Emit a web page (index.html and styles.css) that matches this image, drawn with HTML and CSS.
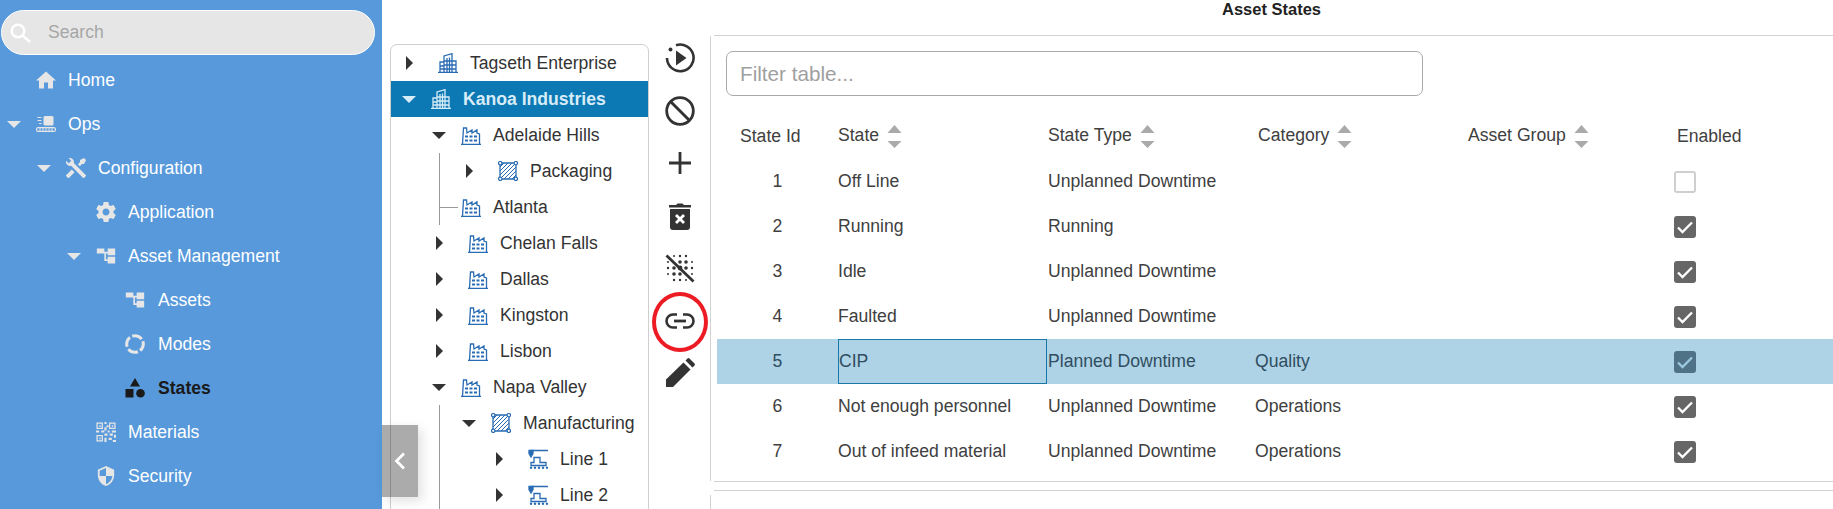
FILE: index.html
```html
<!DOCTYPE html>
<html lang="en">
<head>
<meta charset="utf-8">
<title>Asset States</title>
<link rel="stylesheet" href="styles.css">
</head>
<body>
<svg class="defs" aria-hidden="true">
  <symbol id="i-tree" viewBox="0 0 24 24"><path fill="currentColor" d="M1 3h9v4h4V3h9v8h-9V9h-2v7h2v-3h9v8h-9v-3h-4V9h-0.5v-2H10v2H1z"/></symbol>
  <symbol id="i-building" viewBox="0 0 20 20"><g fill="none" stroke="currentColor" stroke-width="1.3"><path d="M0 19.3h20M2 19V9h4M6 19V3l8-2.3V19M14 8h4v11M9 5v14M11.5 4.5V19M6 8h8M6 12h8M6 16h8M2 13h4M2 16h4M14 12h4M14 16h4"/></g></symbol>
  <symbol id="i-factory" viewBox="0 0 20 20"><g fill="none" stroke="currentColor" stroke-width="1.3"><path d="M0 19.3h20M1.5 19l1-16h3L6 8l5-3v3l5-3v3l2.500 1v10"/><path stroke-width="2" stroke-dasharray="3 1.500" d="M4 11.500h12M4 15.500h12"/></g></symbol>
  <symbol id="i-area" viewBox="0 0 20 20"><path fill="none" stroke="currentColor" stroke-width="1.300" d="M2 2h16v16H2z"/><path fill="none" stroke="currentColor" stroke-width="1" d="M2 6l4-4M2 10l8-8M2 14L14 2M3 17L17 3M6 18L18 6M10 18l8-8M14 18l4-4"/><g fill="#fff" stroke="currentColor" stroke-width="1.200"><circle cx="2.200" cy="2.200" r="1.700"/><circle cx="17.800" cy="2.200" r="1.700"/><circle cx="2.200" cy="17.800" r="1.700"/><circle cx="17.800" cy="17.800" r="1.700"/></g></symbol>
  <symbol id="i-line" viewBox="0 0 20 20"><g fill="none" stroke="currentColor" stroke-width="1.300"><path d="M3 1.500h17M6 8.500h6v5h6v3H3v-3h3z"/><path fill="currentColor" d="M1 1.500h4v3L3 8 1 4.500z"/></g><g fill="currentColor"><circle cx="3" cy="18.700" r="1.200"/><circle cx="7" cy="18.700" r="1.200"/><circle cx="11" cy="18.700" r="1.200"/><circle cx="15" cy="18.700" r="1.200"/><circle cx="19" cy="18.700" r="1.200"/></g></symbol>
  <symbol id="i-check" viewBox="0 0 22 22"><path fill="none" stroke="currentColor" stroke-width="2.300" d="M4 11.500l4.500 4.500L18 6.500"/></symbol>
  <symbol id="i-sort" viewBox="0 0 15 23"><path fill="currentColor" d="M7.500 0l7 8H.5zM.5 16h14l-7 7z"/></symbol>
</svg>

<aside class="sidebar">
  <div class="search">
    <svg class="search-icon" viewBox="0 0 21 20"><circle cx="8" cy="8" r="6.300" fill="none" stroke="currentColor" stroke-width="2.400"/><path d="M12.500 12.500l7.500 6.500" fill="none" stroke="currentColor" stroke-width="2.400"/></svg>
    <span class="search-text">Search</span>
  </div>
  <nav>
    <div class="nav-row lvl0 noarrow">
      <svg class="nav-icon" viewBox="2 3 20 17"><path fill="currentColor" d="M10 20v-6h4v6h5v-8h3L12 3 2 12h3v8z"/></svg>
      <span>Home</span>
    </div>
    <div class="nav-row lvl0">
      <i class="nav-arrow"></i>
      <svg class="nav-icon" viewBox="0 0 20 16"><rect x="7.500" y="0" width="10" height="9.500" rx="1.500" fill="currentColor"/><path stroke="currentColor" stroke-width="1.200" d="M1.500 1.500h4M1.500 4.500h4M3 7.500h2.500"/><rect x=".6" y="11.600" width="18.800" height="3.800" rx="1.500" fill="none" stroke="currentColor" stroke-width="1.200"/><path stroke="currentColor" stroke-width="1" d="M4 12v3M7 12v3M10 12v3M13 12v3M16 12v3"/></svg>
      <span>Ops</span>
    </div>
    <div class="nav-row lvl1">
      <i class="nav-arrow"></i>
      <svg class="nav-icon" viewBox="2 2 20 20"><path fill="currentColor" d="M21.710 20.290L20.290 21.710A1 1 0 0 1 18.880 21.710L7 9.850A3.810 3.810 0 0 1 6 10A4 4 0 0 1 2.220 4.700L4.760 7.240L5.290 6.710L6.710 5.290L7.240 4.760L4.700 2.220A4 4 0 0 1 10 6A3.810 3.810 0 0 1 9.850 7L21.710 18.880A1 1 0 0 1 21.710 20.290M2.290 18.880A1 1 0 0 0 2.290 20.290L3.710 21.710A1 1 0 0 0 5.120 21.710L10.590 16.250L7.760 13.420M20 2L16 4V6L13.830 8.170L15.830 10.170L18 8H20L22 4Z"/></svg>
      <span>Configuration</span>
    </div>
    <div class="nav-row lvl2 noarrow">
      <svg class="nav-icon" viewBox="2 2 20 20"><path fill="currentColor" d="M19.430 12.980c.040-.320.070-.640.070-.980s-.030-.660-.070-.980l2.110-1.650c.190-.150.240-.420.120-.640l-2-3.460c-.120-.220-.390-.300-.610-.220l-2.490 1c-.520-.400-1.080-.730-1.690-.980l-.380-2.650C14.460 2.180 14.250 2 14 2h-4c-.250 0-.460.180-.490.420l-.380 2.650c-.610.250-1.170.590-1.690.980l-2.490-1c-.230-.090-.490 0-.610.220l-2 3.460c-.130.220-.070.490.120.640l2.110 1.650c-.040.320-.070.650-.070.980s.030.660.070.980l-2.110 1.650c-.190.150-.240.420-.120.640l2 3.460c.120.220.390.300.610.220l2.490-1c.520.400 1.080.730 1.690.980l.380 2.650c.030.240.240.420.490.420h4c.250 0 .460-.180.490-.420l.380-2.650c.610-.250 1.170-.590 1.690-.980l2.490 1c.230.090.490 0 .610-.220l2-3.460c.120-.220.070-.490-.120-.640l-2.110-1.650zM12 15.500c-1.930 0-3.500-1.570-3.500-3.500s1.570-3.500 3.500-3.500 3.500 1.570 3.500 3.500-1.570 3.500-3.500 3.500z"/></svg>
      <span>Application</span>
    </div>
    <div class="nav-row lvl2">
      <i class="nav-arrow"></i>
      <svg class="nav-icon"><use href="#i-tree"/></svg>
      <span>Asset Management</span>
    </div>
    <div class="nav-row lvl3 noarrow">
      <svg class="nav-icon"><use href="#i-tree"/></svg>
      <span>Assets</span>
    </div>
    <div class="nav-row lvl3 noarrow">
      <svg class="nav-icon" viewBox="0 0 20 20"><circle cx="10" cy="10" r="8.300" fill="none" stroke="currentColor" stroke-width="3" stroke-dasharray="10.500 2.500" stroke-dashoffset="3"/></svg>
      <span>Modes</span>
    </div>
    <div class="nav-row lvl3 noarrow active">
      <svg class="nav-icon" viewBox="0 0 20 20"><path fill="currentColor" d="M10 0l5 8.500H5zM.5 11h8v8.500h-8z"/><circle cx="15.500" cy="15.300" r="4.300" fill="currentColor"/></svg>
      <span>States</span>
    </div>
    <div class="nav-row lvl2 noarrow">
      <svg class="nav-icon qr" viewBox="0 0 19 19"><g fill="none" stroke="currentColor" stroke-width="1.200"><path d="M1 1h5v5H1zM13 1h5v5h-5zM1 13h5v5H1z"/></g><path fill="currentColor" d="M3 3h1.500v1.500H3zM15 3h1.500v1.500H15zM3 15h1.500v1.500H3zM8 0h2v2H8zM10 3h2v2h-2zM8 5h2v3H8zM0 8h3v2H0zM5 8h3v2H5zM11 8h2v2h-2zM15 8h4v2h-4zM8 11h3v2H8zM13 11h3v2h-3zM17 12h2v3h-2zM8 15h2v4H8zM12 15h3v2h-3zM16 17h3v2h-3z"/></svg>
      <span>Materials</span>
    </div>
    <div class="nav-row lvl2 noarrow">
      <svg class="nav-icon shield" viewBox="3 1 18 22"><path fill="currentColor" d="M12 1L3 5v6c0 5.550 3.840 10.740 9 12 5.160-1.260 9-6.450 9-12V5l-9-4zm0 10.990h7c-.530 4.120-3.280 7.790-7 8.940V12H5V6.300l7-3.110v8.800z"/></svg>
      <span>Security</span>
    </div>
  </nav>
</aside>

<button class="collapse" type="button" aria-label="Collapse">
  <svg viewBox="0 0 12 18"><path d="M10 1.500L2.500 9l7.500 7.500" fill="none" stroke="currentColor" stroke-width="2.800"/></svg>
</button>

<section class="tree-col">
  <div class="tree">
    <div class="t-row d0"><i class="t-arrow right"></i><svg class="t-icon"><use href="#i-building"/></svg><span>Tagseth Enterprise</span></div>
    <div class="t-row d0 selected"><i class="t-arrow down"></i><svg class="t-icon"><use href="#i-building"/></svg><span>Kanoa Industries</span></div>
    <div class="t-row d1"><i class="t-arrow down"></i><svg class="t-icon"><use href="#i-factory"/></svg><span>Adelaide Hills</span></div>
    <div class="t-row d2 guide"><i class="t-arrow right"></i><svg class="t-icon"><use href="#i-area"/></svg><span>Packaging</span></div>
    <div class="t-row d1 guide guide-end"><i class="t-arrow none"></i><svg class="t-icon"><use href="#i-factory"/></svg><span>Atlanta</span></div>
    <div class="t-row d1"><i class="t-arrow right"></i><svg class="t-icon"><use href="#i-factory"/></svg><span>Chelan Falls</span></div>
    <div class="t-row d1"><i class="t-arrow right"></i><svg class="t-icon"><use href="#i-factory"/></svg><span>Dallas</span></div>
    <div class="t-row d1"><i class="t-arrow right"></i><svg class="t-icon"><use href="#i-factory"/></svg><span>Kingston</span></div>
    <div class="t-row d1"><i class="t-arrow right"></i><svg class="t-icon"><use href="#i-factory"/></svg><span>Lisbon</span></div>
    <div class="t-row d1"><i class="t-arrow down"></i><svg class="t-icon"><use href="#i-factory"/></svg><span>Napa Valley</span></div>
    <div class="t-row d2 guide"><i class="t-arrow down"></i><svg class="t-icon"><use href="#i-area"/></svg><span>Manufacturing</span></div>
    <div class="t-row d3 guide"><i class="t-arrow right"></i><svg class="t-icon"><use href="#i-line"/></svg><span>Line 1</span></div>
    <div class="t-row d3 guide"><i class="t-arrow right"></i><svg class="t-icon"><use href="#i-line"/></svg><span>Line 2</span></div>
  </div>
</section>

<section class="toolbar">
  <svg class="tool" viewBox="0 0 30 30"><path d="M11 2.300A13.300 13.300 0 1 1 2 15" fill="none" stroke="currentColor" stroke-width="2.600"/><circle cx="5.500" cy="6.500" r="2" fill="currentColor"/><path fill="currentColor" d="M11 7.500l10.500 7.500L11 22.500z"/></svg>
  <svg class="tool" viewBox="0 0 30 30"><circle cx="15" cy="15" r="13.300" fill="none" stroke="currentColor" stroke-width="2.800"/><path d="M5.500 5.500l19 19" stroke="currentColor" stroke-width="3"/></svg>
  <svg class="tool" viewBox="0 0 30 30"><path d="M15 4v22M4 15h22" stroke="currentColor" stroke-width="2.800"/></svg>
  <svg class="tool" viewBox="0 0 30 30"><path fill="currentColor" d="M4 4h7l1.500-1.500h5L19 4h7v2.500H4zM5 8h20v18a3 3 0 0 1-3 3H8a3 3 0 0 1-3-3z"/><path d="M11 14l8 8M19 14l-8 8" stroke="#fff" stroke-width="2.800"/></svg>
  <svg class="tool" viewBox="0 0 30 30"><g fill="currentColor"><circle cx="9" cy="3" r="1"/><circle cx="15" cy="3" r="1.200"/><circle cx="21" cy="3" r="1.200"/><circle cx="3" cy="9" r="1"/><circle cx="15" cy="9" r="1.800"/><circle cx="21" cy="9" r="1.800"/><circle cx="27" cy="9" r="1"/><circle cx="3" cy="15" r="1.200"/><circle cx="9" cy="15" r="1.800"/><circle cx="15" cy="15" r="2.400"/><circle cx="21" cy="15" r="1.800"/><circle cx="27" cy="15" r="1.200"/><circle cx="3" cy="21" r="1"/><circle cx="9" cy="21" r="1.800"/><circle cx="15" cy="21" r="1.800"/><circle cx="27" cy="21" r="1"/><circle cx="9" cy="27" r="1.200"/><circle cx="15" cy="27" r="1.200"/><circle cx="21" cy="27" r="1"/></g><path d="M1.500 2.500l27 26" stroke="currentColor" stroke-width="2.800"/></svg>
  <svg class="tool" viewBox="0 0 30 30"><path d="M12 8.500H8a6.500 6.500 0 0 0 0 13h4M18 8.500h4a6.500 6.500 0 0 1 0 13h-4" fill="none" stroke="currentColor" stroke-width="2.600"/><path d="M9 15h12" stroke="currentColor" stroke-width="2.800"/></svg>
  <svg class="tool" viewBox="0 0 30 30"><path fill="currentColor" d="M1 21.500L18.500 4.500l7 7L8 29H1zM20.500 2.500l2-2a1.500 1.500 0 0 1 2 0l5 5a1.500 1.500 0 0 1 0 2l-2 2z"/></svg>
</section>

<div class="annotation"></div>

<main class="main">
  <h1 class="title">Asset States</h1>
  <div class="rule"></div>
  <div class="card">
    <div class="filter">Filter table...</div>
    <div class="grid head">
      <div class="id-head">State Id</div>
      <div>State<svg class="sort"><use href="#i-sort"/></svg></div>
      <div>State Type<svg class="sort"><use href="#i-sort"/></svg></div>
      <div>Category<svg class="sort"><use href="#i-sort"/></svg></div>
      <div>Asset Group<svg class="sort"><use href="#i-sort"/></svg></div>
      <div>Enabled</div>
    </div>
    <div class="grid row"><div class="id">1</div><div>Off Line</div><div>Unplanned Downtime</div><div></div><div></div><div><span class="box off"></span></div></div>
    <div class="grid row"><div class="id">2</div><div>Running</div><div>Running</div><div></div><div></div><div><span class="box"><svg><use href="#i-check"/></svg></span></div></div>
    <div class="grid row"><div class="id">3</div><div>Idle</div><div>Unplanned Downtime</div><div></div><div></div><div><span class="box"><svg><use href="#i-check"/></svg></span></div></div>
    <div class="grid row"><div class="id">4</div><div>Faulted</div><div>Unplanned Downtime</div><div></div><div></div><div><span class="box"><svg><use href="#i-check"/></svg></span></div></div>
    <div class="grid row current"><div class="id">5</div><div class="focus">CIP</div><div>Planned Downtime</div><div class="cat">Quality</div><div></div><div><span class="box"><svg><use href="#i-check"/></svg></span></div></div>
    <div class="grid row"><div class="id">6</div><div>Not enough personnel</div><div>Unplanned Downtime</div><div class="cat">Operations</div><div></div><div><span class="box"><svg><use href="#i-check"/></svg></span></div></div>
    <div class="grid row"><div class="id">7</div><div>Out of infeed material</div><div>Unplanned Downtime</div><div class="cat">Operations</div><div></div><div><span class="box"><svg><use href="#i-check"/></svg></span></div></div>
  </div>
  <div class="rule"></div>
  <div class="rule second"></div>
  <div class="card rest"></div>
</main>
</body>
</html>
```

FILE: styles.css
```css
* { box-sizing: border-box; }
html, body { margin: 0; height: 509px; overflow: hidden; }
body {
  display: flex;
  position: relative;
  background: #fff;
  font-family: "Liberation Sans", Arial, sans-serif;
  font-size: 17.6px;
  color: #404040;
}
.defs { width: 0; height: 0; position: absolute; }

/* sidebar */
.sidebar {
  flex: 0 0 382px;
  background: #5799db;
  color: #fff;
  padding-top: 10px;
}
.search {
  display: flex;
  align-items: center;
  width: 374px;
  height: 45px;
  margin-left: 1px;
  padding-left: 8px;
  background: #e6e6e6;
  border: 1px solid #fff;
  border-radius: 23px;
}
.search-icon { width: 21px; height: 20px; color: #fff; }
.search-text { margin-left: 17px; color: #a6a6a6; }
nav { margin-top: 3px; }
.nav-row {
  display: flex;
  align-items: center;
  height: 44px;
}
.nav-row.lvl0 { padding-left: 7px; }
.nav-row.lvl1 { padding-left: 37px; }
.nav-row.lvl2 { padding-left: 67px; }
.nav-row.lvl3 { padding-left: 97px; }
.nav-row.noarrow { padding-left: 36px; }
.nav-row.lvl2.noarrow { padding-left: 96px; }
.nav-row.lvl3.noarrow { padding-left: 125px; }
.nav-arrow {
  width: 0; height: 0;
  margin-right: 15px;
  border-left: 7px solid transparent;
  border-right: 7px solid transparent;
  border-top: 7.5px solid #e6e6e6;
}
.nav-icon { width: 20px; height: 20px; margin-right: 12px; color: #e6e6e6; flex: none; }
.nav-row.lvl3 .nav-icon { margin-right: 13px; }
.nav-row.active { color: #1a1a1a; font-weight: 700; }
.nav-row.active .nav-icon { color: #1a1a1a; }

/* collapse handle */
.collapse {
  position: absolute;
  left: 382px;
  top: 425px;
  width: 36px;
  height: 72px;
  padding: 0;
  border: 0;
  background: rgba(0, 0, 0, .33);
  box-shadow: 4px 4px 12px rgba(0, 0, 0, .12);
  color: #fff;
  z-index: 3;
}
.collapse svg { display: block; width: 12px; height: 18px; margin-left: 12px; }

/* tree */
.tree-col { flex: 0 0 267px; padding: 44px 0 0 8px; }
.tree {
  height: 480px;
  border: 1px solid #cfcfcf;
  border-radius: 7px 7px 0 0;
  overflow: hidden;
}
.t-row {
  position: relative;
  display: flex;
  align-items: center;
  height: 36px;
  color: #333;
  white-space: nowrap;
}
.t-row.d0 { padding-left: 11px; }
.t-row.d1 { padding-left: 41px; }
.t-row.d2 { padding-left: 71px; }
.t-row.d3 { padding-left: 101px; }
.t-arrow { flex: none; width: 29px; height: 14px; }
.t-arrow.right {
  width: 0; height: 0;
  margin: 0 25px 0 4px;
  border-top: 7px solid transparent;
  border-bottom: 7px solid transparent;
  border-left: 7.5px solid #333;
}
.t-arrow.down {
  width: 0; height: 0;
  margin-right: 15px;
  border-left: 7.5px solid transparent;
  border-right: 7.5px solid transparent;
  border-top: 7.5px solid #333;
}
.t-icon { flex: none; width: 20px; height: 20px; margin-right: 12px; color: #2a6cb3; }
.t-row.selected { background: #0c79b4; color: #d6ecf8; font-weight: 700; }
.t-row.selected .t-icon { color: #d6ecf8; }
.t-row.selected .t-arrow.down { border-top-color: #d6ecf8; }
.t-row.guide::before {
  content: "";
  position: absolute;
  left: 48px;
  top: 0;
  bottom: 0;
  width: 1px;
  background: #9a9a9a;
}
.t-row.guide-end::before { bottom: 0; }
.t-row.guide-end::after {
  content: "";
  position: absolute;
  left: 48px;
  top: 18px;
  width: 19px;
  height: 1px;
  background: #9a9a9a;
}

/* toolbar */
.toolbar {
  flex: 0 0 61px;
  display: flex;
  flex-direction: column;
  align-items: center;
  padding-top: 43px;
  color: #333;
}
.tool { flex: none; width: 30px; height: 30px; margin-bottom: 22.5px; }
.annotation {
  position: absolute;
  left: 652px;
  top: 292px;
  width: 56px;
  height: 60px;
  border: 4.5px solid #ed1c24;
  border-radius: 50%;
}

/* main */
.main { flex: 1; min-width: 0; }
.title {
  margin: 0;
  height: 35px;
  padding-top: 0;
  font-size: 16.500px;
  line-height: 18px;
  font-weight: 700;
  text-align: center;
  color: #222;
  padding-right: 0;
}
.rule { height: 1px; margin-left: 4px; background: #d2d2d2; }
.rule.second { margin-top: 8px; }
.card {
  height: 445px;
  margin-top: 0;
  border-left: 1px solid #d2d2d2;
  padding-top: 15px;
}
.card.rest { height: 20px; margin-top: 4px; padding: 0; }
.filter {
  width: 697px;
  height: 45px;
  margin-left: 15px;
  padding-left: 13px;
  border: 1px solid #aaa;
  border-radius: 7px;
  font-size: 20.700px;
  line-height: 43px;
  color: #a0a0a0;
}
.grid {
  display: grid;
  grid-template-columns: 121px 209px 210px 210px 210px 1fr;
  align-items: center;
  margin-left: 6px;
  white-space: nowrap;
}
.head { height: 63px; padding-top: 17px; }
.id-head { padding-left: 23px; }
.sort { width: 15px; height: 23px; margin-left: 8px; vertical-align: middle; color: #aaa; }
.row { height: 45px; }
.id { text-align: center; }
.row > .cat { margin-left: -2px; }
.head > div:nth-child(n+3), .row > div:nth-child(3) { padding-left: 1px; }
.box {
  display: block;
  width: 22px;
  height: 22px;
  margin-left: -3px;
  border-radius: 3px;
  background: #666;
  color: #fff;
}
.box svg { display: block; width: 22px; height: 22px; }
.box.off { background: #fff; border: 2px solid #cfcfcf; }
.row.current { background: #afd3e6; color: #2f4d60; }
.row.current .box { background: #4f7287; color: #9cc8df; }
.focus {
  height: 45px;
  line-height: 43px;
  border: 1px solid #1a78a8;
}
.grid.head > div:last-child, .grid.row > div:last-child { padding-left: 0; }
```
